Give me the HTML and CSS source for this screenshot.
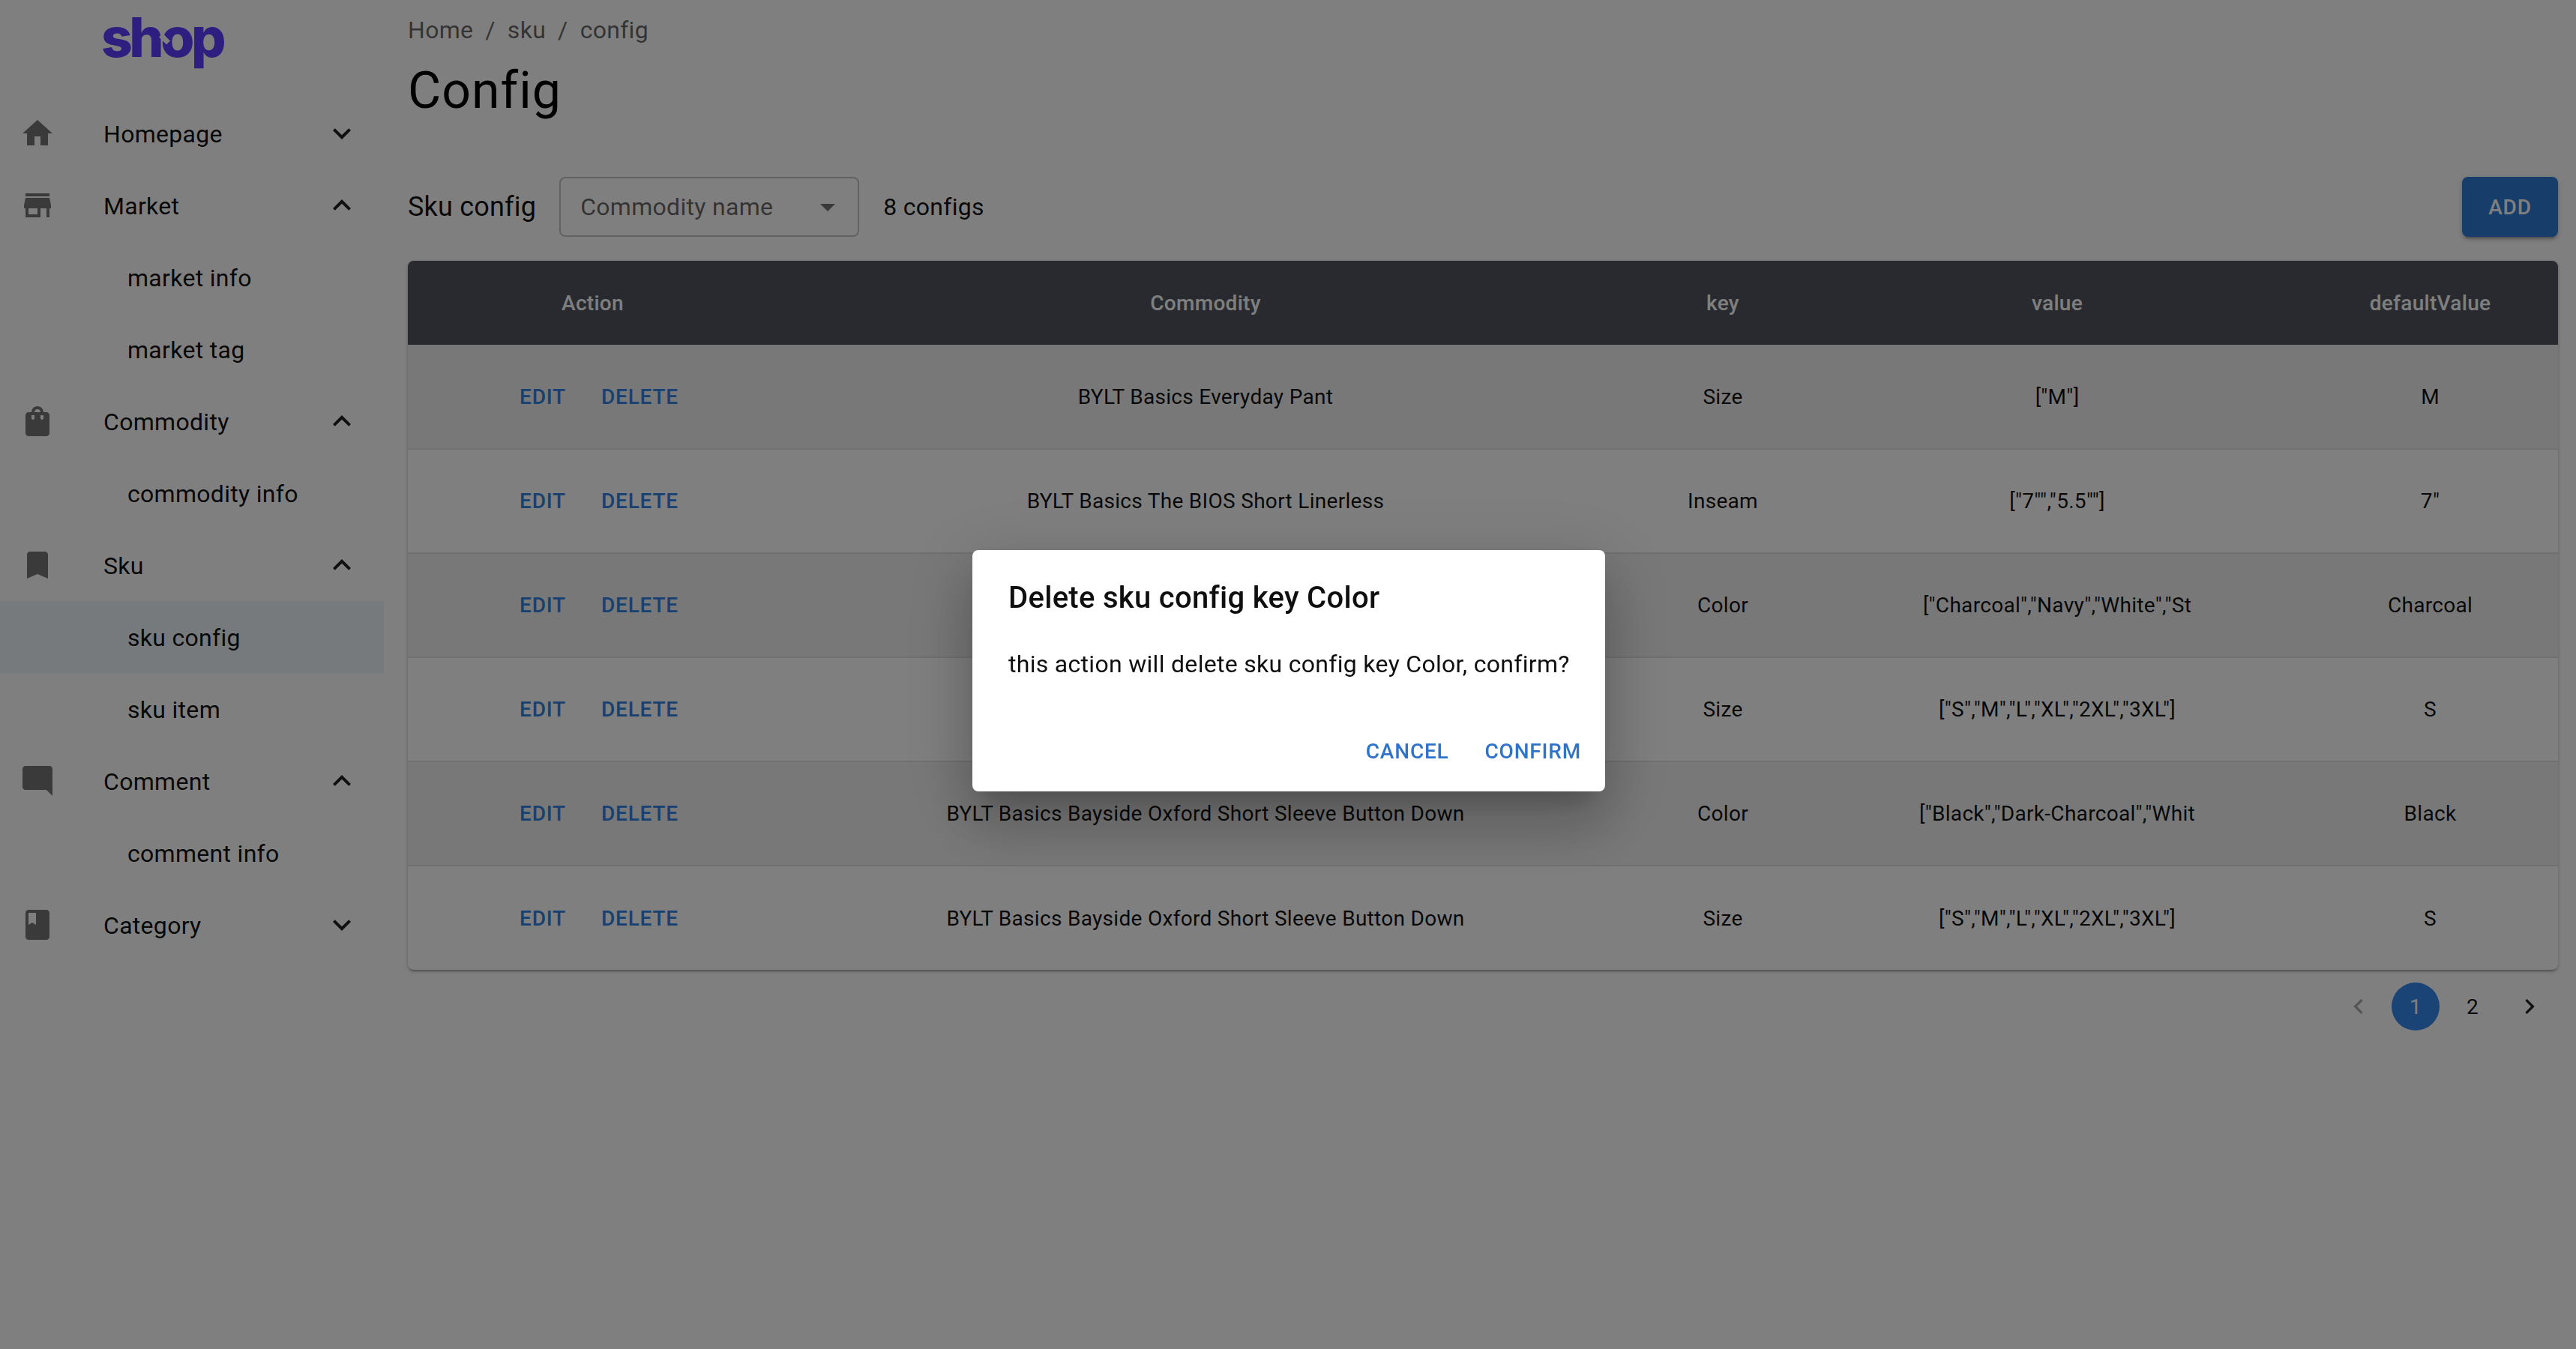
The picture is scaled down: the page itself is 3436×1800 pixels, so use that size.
FILE: index.html
```html
<!DOCTYPE html>
<html lang="en">
  <head>
    <meta charset="utf-8" />
    <meta name="viewport" content="width=device-width, initial-scale=1" />
    <title>Sku config</title>
    <link rel="stylesheet" href="styles.css">
  </head>
  <body>
    <!-- icons used by the menu, toolbar and pagination -->
    <svg class="sprite" aria-hidden="true">
      <symbol id="i-home" viewBox="0 0 24 24"><path d="M10 20v-6h4v6h5v-8h3L12 3 2 12h3v8z" /></symbol>
      <symbol id="i-store" viewBox="0 0 24 24"><path d="M20 4H4v2h16V4zm1 10v-2l-1-5H4l-1 5v2h1v6h10v-6h4v6h2v-6h1zm-9 4H6v-4h6v4z" /></symbol>
      <symbol id="i-bag" viewBox="0 0 24 24"><path d="M18 6h-2c0-2.21-1.79-4-4-4S8 3.79 8 6H6c-1.1 0-2 .9-2 2v12c0 1.1.9 2 2 2h12c1.1 0 2-.9 2-2V8c0-1.1-.9-2-2-2zm-8 4c0 .55-.45 1-1 1s-1-.45-1-1V8h2v2zm2-6c1.1 0 2 .9 2 2h-4c0-1.1.9-2 2-2zm4 6c0 .55-.45 1-1 1s-1-.45-1-1V8h2v2z" /></symbol>
      <symbol id="i-bookmark" viewBox="0 0 24 24"><path d="M17 3H7c-1.1 0-1.99.9-1.99 2L5 21l7-3 7 3V5c0-1.1-.9-2-2-2z" /></symbol>
      <symbol id="i-comment" viewBox="0 0 24 24"><path d="M21.99 4c0-1.1-.89-2-1.99-2H4c-1.1 0-2 .9-2 2v12c0 1.1.9 2 2 2h14l4 4-.01-18z" /></symbol>
      <symbol id="i-book" viewBox="0 0 24 24"><path d="M18 2H6c-1.1 0-2 .9-2 2v16c0 1.1.9 2 2 2h12c1.1 0 2-.9 2-2V4c0-1.1-.9-2-2-2zM6 4h5v8l-2.5-1.5L6 12V4z" /></symbol>
      <symbol id="i-more" viewBox="0 0 24 24"><path d="M16.59 8.59 12 13.17 7.41 8.59 6 10l6 6 6-6z" /></symbol>
      <symbol id="i-less" viewBox="0 0 24 24"><path d="M12 8l-6 6 1.41 1.41L12 10.83l4.59 4.58L18 14z" /></symbol>
      <symbol id="i-left" viewBox="0 0 24 24"><path d="M15.41 7.41 14 6l-6 6 6 6 1.41-1.41L10.83 12z" /></symbol>
      <symbol id="i-right" viewBox="0 0 24 24"><path d="M10 6 8.59 7.41 13.17 12l-4.58 4.59L10 18l6-6z" /></symbol>
      <symbol id="i-drop" viewBox="0 0 24 24"><path d="M7 10l5 5 5-5z" /></symbol>
    </svg>

    <div class="app">
      <aside class="sidebar">
        <div class="logo">shop</div>
        <nav>
          <a class="menu-item">
            <svg class="menu-icon"><use href="#i-home" /></svg>
            <span class="menu-label">Homepage</span>
            <svg class="menu-arrow"><use href="#i-more" /></svg>
          </a>
          <a class="menu-item">
            <svg class="menu-icon"><use href="#i-store" /></svg>
            <span class="menu-label">Market</span>
            <svg class="menu-arrow"><use href="#i-less" /></svg>
          </a>
          <a class="sub-item">market info</a>
          <a class="sub-item">market tag</a>
          <a class="menu-item">
            <svg class="menu-icon"><use href="#i-bag" /></svg>
            <span class="menu-label">Commodity</span>
            <svg class="menu-arrow"><use href="#i-less" /></svg>
          </a>
          <a class="sub-item">commodity info</a>
          <a class="menu-item">
            <svg class="menu-icon"><use href="#i-bookmark" /></svg>
            <span class="menu-label">Sku</span>
            <svg class="menu-arrow"><use href="#i-less" /></svg>
          </a>
          <a class="sub-item selected">sku config</a>
          <a class="sub-item">sku item</a>
          <a class="menu-item">
            <svg class="menu-icon"><use href="#i-comment" /></svg>
            <span class="menu-label">Comment</span>
            <svg class="menu-arrow"><use href="#i-less" /></svg>
          </a>
          <a class="sub-item">comment info</a>
          <a class="menu-item">
            <svg class="menu-icon"><use href="#i-book" /></svg>
            <span class="menu-label">Category</span>
            <svg class="menu-arrow"><use href="#i-more" /></svg>
          </a>
        </nav>
      </aside>

      <main class="content">
        <div class="breadcrumb">
          <span>Home</span><span class="sep">/</span><span>sku</span><span class="sep">/</span><span>config</span>
        </div>
        <h1 class="page-title">Config</h1>

        <div class="toolbar">
          <span class="toolbar-title">Sku config</span>
          <div class="select">
            <span>Commodity name</span>
            <svg class="select-arrow"><use href="#i-drop" /></svg>
          </div>
          <span class="count">8 configs</span>
          <button class="add-btn">ADD</button>
        </div>

        <div class="table-wrap">
          <table>
            <thead>
              <tr>
                <th class="col-action">Action</th>
                <th class="col-commodity">Commodity</th>
                <th class="col-key">key</th>
                <th class="col-value">value</th>
                <th class="col-default">defaultValue</th>
              </tr>
            </thead>
            <tbody>
              <tr>
                <td><button class="link-btn">EDIT</button><button class="link-btn">DELETE</button></td>
                <td>BYLT Basics Everyday Pant</td>
                <td>Size</td>
                <td>["M"]</td>
                <td>M</td>
              </tr>
              <tr>
                <td><button class="link-btn">EDIT</button><button class="link-btn">DELETE</button></td>
                <td>BYLT Basics The BIOS Short Linerless</td>
                <td>Inseam</td>
                <td>["7"","5.5""]</td>
                <td>7"</td>
              </tr>
              <tr>
                <td><button class="link-btn">EDIT</button><button class="link-btn">DELETE</button></td>
                <td></td>
                <td>Color</td>
                <td>["Charcoal","Navy","White","St</td>
                <td>Charcoal</td>
              </tr>
              <tr>
                <td><button class="link-btn">EDIT</button><button class="link-btn">DELETE</button></td>
                <td></td>
                <td>Size</td>
                <td>["S","M","<span class="kern">L</span>","X<span class="kern">L</span>","2X<span class="kern">L</span>","3X<span class="kern">L</span>"]</td>
                <td>S</td>
              </tr>
              <tr>
                <td><button class="link-btn">EDIT</button><button class="link-btn">DELETE</button></td>
                <td>BYLT Basics Bayside Oxford Short Sleeve Button Down</td>
                <td>Color</td>
                <td>["Black","Dark-Charcoal","Whit</td>
                <td>Black</td>
              </tr>
              <tr>
                <td><button class="link-btn">EDIT</button><button class="link-btn">DELETE</button></td>
                <td>BYLT Basics Bayside Oxford Short Sleeve Button Down</td>
                <td>Size</td>
                <td>["S","M","<span class="kern">L</span>","X<span class="kern">L</span>","2X<span class="kern">L</span>","3X<span class="kern">L</span>"]</td>
                <td>S</td>
              </tr>
            </tbody>
          </table>
        </div>

        <div class="pagination">
          <span class="page-item disabled"><svg><use href="#i-left" /></svg></span>
          <span class="page-item current">1</span>
          <span class="page-item">2</span>
          <span class="page-item"><svg><use href="#i-right" /></svg></span>
        </div>
      </main>
    </div>

    <div class="backdrop">
      <div class="dialog">
        <h2 class="dialog-title">Delete sku config key Color</h2>
        <p class="dialog-text">this action will delete sku config key Color, confirm?</p>
        <div class="dialog-actions">
          <button class="dialog-btn">CANCEL</button>
          <button class="dialog-btn">CONFIRM</button>
        </div>
      </div>
    </div>
  </body>
</html>
```

FILE: styles.css
```css
* {
  box-sizing: border-box;
}

body {
  margin: 0;
  background-color: #ffffff;
  color: rgba(0, 0, 0, 0.94);
  font-family: Roboto, "Liberation Sans", sans-serif;
  font-size: 32px;
  letter-spacing: 0.3px;
  font-kerning: normal;
  text-rendering: optimizeLegibility;
}

button {
  font-family: inherit;
  border: 0;
  background: none;
  cursor: pointer;
}

.sprite {
  display: none;
}

.app {
  display: flex;
  min-height: 1800px;
}

/* left menu */
.sidebar {
  width: 512px;
  flex-shrink: 0;
}

.logo {
  position: relative;
  height: 130px;
  padding-left: 135px;
  color: #5a3cff;
  font-family: Inter, sans-serif;
  font-size: 73px;
  font-weight: 800;
  letter-spacing: -4.5px;
  line-height: 100px;
}

/* the cut in the ring of the "o" */
.logo::after {
  content: "";
  position: absolute;
  left: 216px;
  top: 45px;
  width: 7px;
  height: 14px;
  background-color: #ffffff;
  transform: rotate(-45deg);
}

.menu-item,
.sub-item {
  display: flex;
  align-items: center;
  height: 96px;
}

.menu-item {
  padding: 0 32px 0 26px;
}

.sub-item {
  padding: 2px 0 0 170px;
}

.sub-item.selected {
  background-color: rgba(25, 118, 210, 0.08);
}

.menu-icon {
  width: 48px;
  height: 48px;
  margin-right: 64px;
  fill: rgba(0, 0, 0, 0.54);
}

.menu-label {
  flex: 1;
  padding-top: 2px;
}

.menu-arrow {
  width: 48px;
  height: 48px;
  fill: rgba(0, 0, 0, 0.87);
}

/* main area */
.content {
  flex: 1;
  padding: 16px 24px 0 32px;
}

.breadcrumb {
  height: 48px;
  line-height: 48px;
  color: rgba(0, 0, 0, 0.6);
}

.sep {
  margin: 0 16px;
}

.page-title {
  margin: 14px 0 0 0;
  font-size: 68px;
  font-weight: 400;
  line-height: 86px;
  letter-spacing: 1px;
  color: #000000;
}

.toolbar {
  display: flex;
  align-items: center;
  height: 80px;
  margin-top: 72px;
}

.toolbar-title {
  font-size: 36px;
  letter-spacing: 0.2px;
  margin-right: 31px;
}

.select {
  display: flex;
  align-items: center;
  justify-content: space-between;
  width: 400px;
  height: 80px;
  padding: 0 16px 0 26px;
  margin-right: 32px;
  border: 2px solid rgba(0, 0, 0, 0.23);
  border-radius: 8px;
  color: rgba(0, 0, 0, 0.6);
}

.select-arrow {
  width: 48px;
  height: 48px;
  fill: rgba(0, 0, 0, 0.54);
}

.add-btn {
  width: 128px;
  height: 80px;
  margin-left: auto;
  border-radius: 8px;
  background-color: #2e7bd6;
  color: #ffffff;
  font-size: 28px;
  font-weight: 500;
  letter-spacing: 0.8px;
  box-shadow: 0 6px 2px -4px rgba(0, 0, 0, 0.2), 0 4px 4px 0 rgba(0, 0, 0, 0.14), 0 2px 10px 0 rgba(0, 0, 0, 0.12);
}

/* table */
.table-wrap {
  margin-top: 32px;
  border-radius: 8px;
  overflow: hidden;
  box-shadow: 0 4px 2px -2px rgba(0, 0, 0, 0.2), 0 2px 4px 0 rgba(0, 0, 0, 0.14), 0 2px 6px 0 rgba(0, 0, 0, 0.12);
}

table {
  width: 100%;
  border-collapse: collapse;
  table-layout: fixed;
  font-size: 28px;
}

th {
  height: 112px;
  background-color: #50555f;
  color: #ffffff;
  font-weight: 500;
  text-align: center;
}

.col-action {
  width: 493px;
}

.col-commodity {
  width: 1142px;
}

.col-key {
  width: 238px;
}

.col-value {
  width: 654px;
}

.col-default {
  width: 341px;
}

td {
  height: 139px;
  padding: 0;
  text-align: center;
  white-space: nowrap;
  border-bottom: 2px solid #e0e0e0;
}

tbody tr:last-child td {
  border-bottom: 0;
}

tbody tr:nth-child(odd) {
  background-color: #f0f0f0;
}

td:first-child {
  padding-left: 17px;
}

/* L followed by a quote sits tight in the reference */
.kern {
  letter-spacing: -4px;
}

.link-btn {
  padding: 12px 16px;
  color: #3180e0;
  font-size: 28px;
  font-weight: 500;
  letter-spacing: 0.8px;
}

.link-btn + .link-btn {
  margin-left: 15px;
}

/* pagination */
.pagination {
  display: flex;
  justify-content: flex-end;
  gap: 12px;
  margin-top: 17px;
  padding-right: 6px;
}

.page-item {
  display: flex;
  align-items: center;
  justify-content: center;
  width: 64px;
  height: 64px;
  border-radius: 50%;
  font-size: 28px;
}

.page-item svg {
  width: 40px;
  height: 40px;
  fill: rgba(0, 0, 0, 0.87);
}

.page-item.disabled svg {
  opacity: 0.38;
}

.page-item.current {
  background-color: #3488ec;
  color: #ffffff;
}

/* delete dialog */
.backdrop {
  position: fixed;
  inset: 0;
  display: flex;
  align-items: center;
  justify-content: center;
  padding: 0 0 10px 2px;
  background-color: rgba(0, 0, 0, 0.5);
}

.dialog {
  width: 844px;
  height: 322px;
  background-color: #ffffff;
  border-radius: 8px;
  box-shadow: 0 22px 30px -14px rgba(0, 0, 0, 0.2), 0 48px 76px 6px rgba(0, 0, 0, 0.14), 0 18px 92px 16px rgba(0, 0, 0, 0.12);
}

.dialog-title {
  margin: 0;
  padding: 32px 48px;
  font-size: 40px;
  font-weight: 500;
  line-height: 64px;
  letter-spacing: 0.3px;
}

.dialog-text {
  margin: 0;
  padding: 0 48px 40px;
  line-height: 48px;
  white-space: nowrap;
}

.dialog-actions {
  display: flex;
  justify-content: flex-end;
  gap: 16px;
  padding: 16px;
}

.dialog-btn {
  height: 72px;
  padding: 0 16px;
  color: #2f74c9;
  font-size: 28px;
  font-weight: 500;
  letter-spacing: 0.8px;
}
```
